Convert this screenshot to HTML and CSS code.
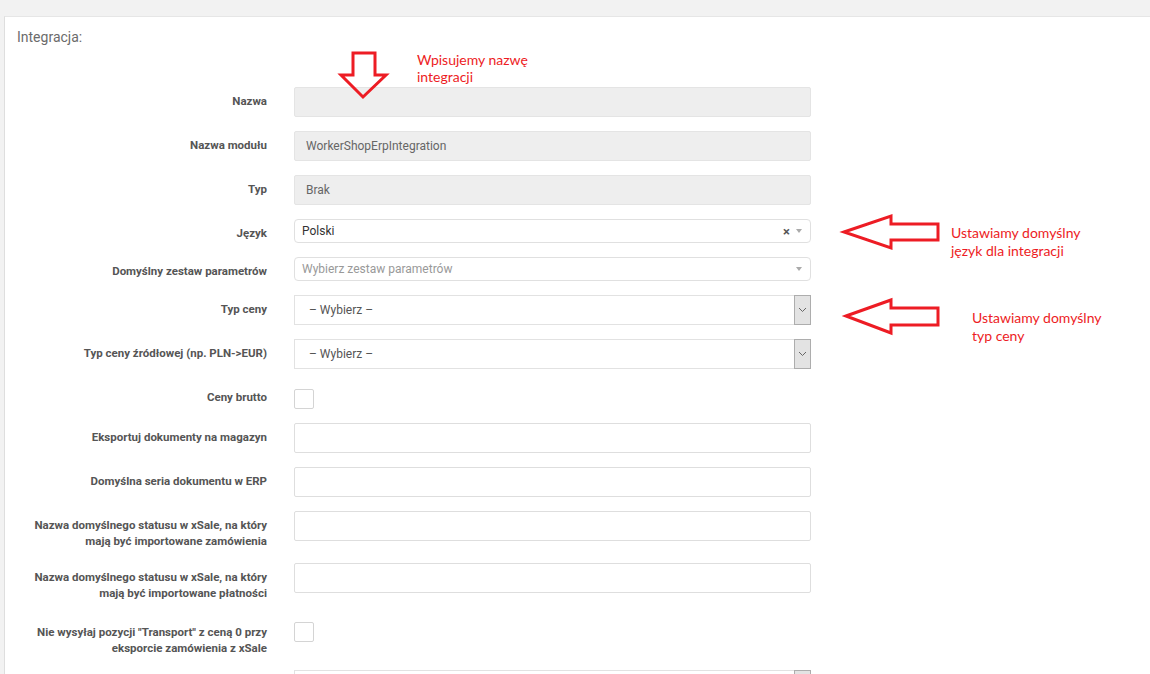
FILE: index.html
```html
<!doctype html>
<html>
<head>
  <meta charset="UTF-8">
  <title>Integracja</title>
  <link rel="stylesheet" href="styles.css">
</head>
<body>

  <div class="panel">
    <h3 class="panel-title">Integracja:</h3>

    <form class="form">
      <div class="row">
        <label class="label">Nazwa</label>
        <div class="control"><input class="field field-readonly" type="text" value="" readonly></div>
      </div>

      <div class="row">
        <label class="label">Nazwa modułu</label>
        <div class="control"><input class="field field-readonly" type="text" value="WorkerShopErpIntegration" readonly></div>
      </div>

      <div class="row">
        <label class="label">Typ</label>
        <div class="control"><input class="field field-readonly" type="text" value="Brak" readonly></div>
      </div>

      <div class="row">
        <label class="label">Język</label>
        <div class="control">
          <div class="select2">
            <span class="select2-text">Polski</span>
            <span class="select2-clear">×</span>
            <span class="select2-arrow"></span>
          </div>
        </div>
      </div>

      <div class="row">
        <label class="label">Domyślny zestaw parametrów</label>
        <div class="control">
          <div class="select2">
            <span class="select2-text placeholder">Wybierz zestaw parametrów</span>
            <span class="select2-arrow"></span>
          </div>
        </div>
      </div>

      <div class="row">
        <label class="label">Typ ceny</label>
        <div class="control">
          <div class="select">
            <span class="select-text">– Wybierz –</span>
            <span class="select-btn"><svg width="9" height="6" viewBox="0 0 9 6"><path d="M1 1 L4.5 4.5 L8 1" fill="none" stroke="#666" stroke-width="1"/></svg></span>
          </div>
        </div>
      </div>

      <div class="row">
        <label class="label">Typ ceny źródłowej (np. PLN-&gt;EUR)</label>
        <div class="control">
          <div class="select">
            <span class="select-text">– Wybierz –</span>
            <span class="select-btn"><svg width="9" height="6" viewBox="0 0 9 6"><path d="M1 1 L4.5 4.5 L8 1" fill="none" stroke="#666" stroke-width="1"/></svg></span>
          </div>
        </div>
      </div>

      <div class="row">
        <label class="label">Ceny brutto</label>
        <div class="control check-wrap"><input class="check" type="checkbox"></div>
      </div>

      <div class="row">
        <label class="label">Eksportuj dokumenty na magazyn</label>
        <div class="control"><input class="field" type="text"></div>
      </div>

      <div class="row">
        <label class="label">Domyślna seria dokumentu w ERP</label>
        <div class="control"><input class="field" type="text"></div>
      </div>

      <div class="row">
        <label class="label label-wide">Nazwa domyślnego statusu w xSale, na który mają być importowane zamówienia</label>
        <div class="control"><input class="field" type="text"></div>
      </div>

      <div class="row">
        <label class="label label-wide">Nazwa domyślnego statusu w xSale, na który mają być importowane płatności</label>
        <div class="control"><input class="field" type="text"></div>
      </div>

      <div class="row row-low">
        <label class="label label-wide">Nie wysyłaj pozycji "Transport" z ceną 0 przy eksporcie zamówienia z xSale</label>
        <div class="control check-wrap"><input class="check" type="checkbox"></div>
      </div>

      <div class="row">
        <label class="label"></label>
        <div class="control">
          <div class="select">
            <span class="select-text"></span>
            <span class="select-btn"></span>
          </div>
        </div>
      </div>
    </form>
  </div>

  <!-- annotations drawn over the screenshot -->
  <svg class="marks" width="1150" height="674" viewBox="0 0 1150 674">
    <polygon points="353,53 375,53 375,75 386,75 363,97 341,75 353,75" fill="none" stroke="#ed1c24" stroke-width="3" stroke-linejoin="miter"/>
    <polygon points="844,232 891,216 891,224 938,224 938,240 891,240 891,248" fill="none" stroke="#ed1c24" stroke-width="3"/>
    <polygon points="846,316 891,300 891,308 938,308 938,325 891,325 891,333" fill="none" stroke="#ed1c24" stroke-width="3"/>
  </svg>
  <p class="note note-name">Wpisujemy nazwę<br>integracji</p>
  <p class="note note-lang">Ustawiamy domyślny<br>język dla integracji</p>
  <p class="note note-price">Ustawiamy domyślny<br>typ ceny</p>

</body>
</html>
```

FILE: styles.css
```css
* {
	box-sizing: border-box;
}

body {
	margin: 0;
	padding: 0;
	background-color: #f2f2f2;
	font-family: Roboto, "Liberation Sans", sans-serif;
	overflow: hidden;
}

.panel {
	margin: 16px 0 0 4px;
	min-height: 700px;
	padding: 10px 12px;
	background-color: #fff;
	border-left: 1px solid #dedede;
	border-top: 1px solid #e6e6e6;
}

.panel-title {
	margin: 0;
	font-size: 14px;
	line-height: 20px;
	font-weight: normal;
	color: #6b6b6b;
}

.form {
	margin-top: 40px;
}

.row {
	display: flex;
	align-items: flex-start;
	margin-bottom: 14px;
}

.label {
	flex: none;
	width: 250px;
	padding-top: 6px;
	text-align: right;
	font-size: 11.5px;
	line-height: 17px;
	font-weight: 700;
	color: #555;
}

.label-wide {
	line-height: 16px;
}

.row-low .label {
	padding-top: 9px;
}

.control {
	flex: none;
	width: 517px;
	margin-left: 27px;
}

.field {
	display: block;
	width: 100%;
	height: 30px;
	padding: 0 11px;
	border: 1px solid #dedede;
	border-radius: 2px;
	background-color: #fff;
	font-family: Roboto, "Liberation Sans", sans-serif;
	font-size: 12px;
	color: #666;
	outline: none;
}

.field-readonly {
	background-color: #eee;
	border-color: #e4e4e4;
}

/* select2 look */
.select2 {
	display: flex;
	align-items: center;
	height: 24px;
	padding: 0 8px 0 7px;
	border: 1px solid #e0e0e0;
	border-radius: 4px;
	background-color: #fff;
	font-size: 12px;
}

.select2-text {
	flex: 1;
	color: #333;
}

.select2-text.placeholder {
	color: #999;
}

.select2-clear {
	font-size: 13px;
	font-weight: 700;
	color: #555;
	margin-right: 6px;
}

.select2-arrow {
	width: 0;
	height: 0;
	border-left: 3px solid transparent;
	border-right: 3px solid transparent;
	border-top: 4px solid #aaa;
}

/* native select look */
.select {
	display: flex;
	align-items: stretch;
	height: 30px;
	border: 1px solid #e2e2e2;
	background-color: #fff;
	font-size: 12px;
}

.select-text {
	flex: 1;
	display: flex;
	align-items: center;
	padding-left: 14px;
	color: #555;
}

.select-btn {
	display: flex;
	align-items: center;
	justify-content: center;
	width: 17px;
	margin: -1px -1px -1px 0;
	border: 1px solid #adadad;
	background-color: #e3e3e3;
}

.check-wrap {
	padding-top: 6px;
}

.row-low .check-wrap {
	padding-top: 7px;
}

.check {
	display: block;
	margin: 0;
	width: 20px;
	height: 20px;
	-webkit-appearance: none;
	appearance: none;
	border: 1px solid #d4d4d4;
	border-radius: 2px;
	background-color: #fff;
}

/* annotations */
.marks {
	position: absolute;
	top: 0;
	left: 0;
	pointer-events: none;
}

.note {
	position: absolute;
	margin: 0;
	font-family: Lato, "Open Sans", sans-serif;
	font-size: 14px;
	line-height: 18px;
	color: #ed1c24;
}

.note-name {
	left: 417px;
	top: 51px;
	line-height: 17px;
}

.note-lang {
	left: 951px;
	top: 224px;
}

.note-price {
	left: 972px;
	top: 309px;
}
```
